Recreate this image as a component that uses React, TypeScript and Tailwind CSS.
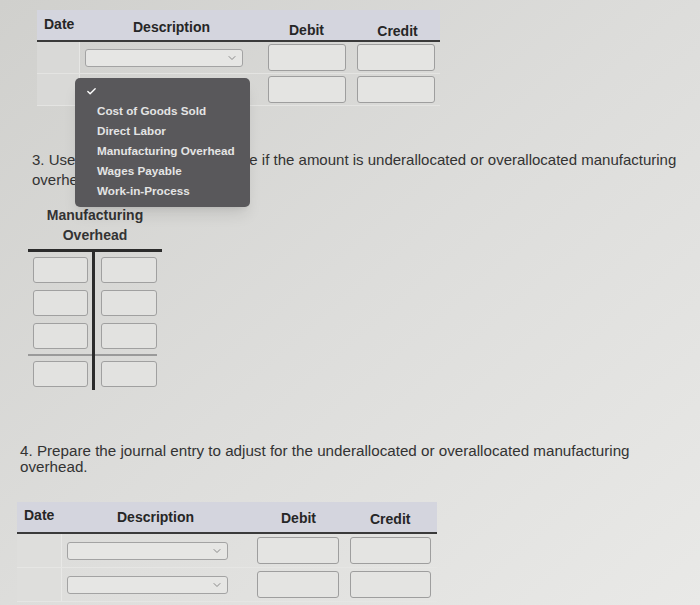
import { Check, ChevronDown } from 'lucide-react';

const menuItems = [
  'Cost of Goods Sold',
  'Direct Labor',
  'Manufacturing Overhead',
  'Wages Payable',
  'Work-in-Process',
];

function SelectBox({ width }: { width: string }) {
  return (
    <div
      className={`${width} h-[18px] rounded-[3px] border border-[#a3a3a3] bg-[#e6e6e4] flex items-center justify-end pr-1`}
    >
      <ChevronDown className="w-3 h-3 text-[#8a8a8a]" strokeWidth={2} />
    </div>
  );
}

function AmountBox({ width }: { width: string }) {
  return <div className={`${width} h-[27px] rounded-[3px] border border-[#9e9e9e] bg-[#e4e4e2]`} />;
}

function TopJournal() {
  return (
    <div className="ml-[37px] pt-[10px] w-[403px]">
      <div className="grid grid-cols-[43px_182px_89px_89px] h-[30px] bg-[#d4d5de] text-[14px] font-bold text-[#262626]">
        <div className="pl-[7px] pt-[4px]">Date</div>
        <div className="pl-[53px] pt-[7px]">Description</div>
        <div className="text-center pt-[10px]">Debit</div>
        <div className="text-center pt-[11px] pl-[4px]">Credit</div>
      </div>
      <div className="h-[2px] bg-[#3a3a3a]" />
      {[0, 1].map((row) => (
        <div
          key={row}
          className="grid grid-cols-[43px_182px_89px_89px] h-[32px] border-b border-[#e4e4e2]"
        >
          <div className="bg-[#d9d9d7] border-r border-[#e6e6e4]" />
          <div className="flex items-center pl-[5px]">
            {row === 0 && <SelectBox width="w-[158px]" />}
          </div>
          <div className="flex items-center pl-[6px]">
            <AmountBox width="w-[78px]" />
          </div>
          <div className="flex items-center pl-[6px]">
            <AmountBox width="w-[78px]" />
          </div>
        </div>
      ))}
    </div>
  );
}

function TAccount() {
  const box = 'h-[26px] rounded-[3px] border border-[#a0a0a0] bg-[#e2e2e0]';
  return (
    <div className="ml-[28px] w-[134px]">
      <div className="text-center text-[14px] leading-[20px] font-bold text-[#333]">
        Manufacturing
        <br />
        Overhead
      </div>
      <div className="mt-[4px] h-[3px] bg-[#2b2b2b]" />
      <div className="flex">
        <div className="w-[64px] pl-[5px] pr-[4px] pt-[5px] flex flex-col gap-[7px]">
          <div className={box} />
          <div className={box} />
          <div className={box} />
          <div className="h-[2px] -mx-[5px] bg-[#9a9a9a] -my-[2px]" />
          <div className={box} />
        </div>
        <div className="w-[3px] h-[138px] bg-[#2b2b2b]" />
        <div className="w-[67px] pl-[6px] pr-[5px] pt-[5px] flex flex-col gap-[7px]">
          <div className={box} />
          <div className={box} />
          <div className={box} />
          <div className="h-[2px] -ml-[6px] bg-[#9a9a9a] -my-[2px]" />
          <div className={box} />
        </div>
      </div>
    </div>
  );
}

function BottomJournal() {
  return (
    <div className="ml-[17px] mt-[27px] w-[420px]">
      <div className="grid grid-cols-[45px_188px_96px_91px] h-[30px] bg-[#d4d5de] text-[14px] font-bold text-[#262626]">
        <div className="pl-[7px] pt-[3px]">Date</div>
        <div className="pl-[55px] pt-[5px]">Description</div>
        <div className="pl-[31px] pt-[6px]">Debit</div>
        <div className="pl-[24px] pt-[7px]">Credit</div>
      </div>
      <div className="h-[2px] bg-[#3a3a3a]" />
      {[0, 1].map((row) => (
        <div
          key={row}
          className="grid grid-cols-[45px_188px_96px_91px] h-[34px] border-b border-[#e6e6e4]"
        >
          <div className="bg-[#dededc] border-r border-[#e8e8e6]" />
          <div className="flex items-center pl-[5px]">
            <SelectBox width="w-[161px]" />
          </div>
          <div className="flex items-center pl-[7px]">
            <AmountBox width="w-[82px]" />
          </div>
          <div className="flex items-center pl-[4px]">
            <AmountBox width="w-[81px]" />
          </div>
        </div>
      ))}
    </div>
  );
}

export default function App() {
  return (
    <div
      className="relative w-[700px] h-[605px] overflow-hidden bg-gradient-to-br from-[#d0d0cd] via-[#dddddb] to-[#e9e9e7] text-[#333]"
      style={{ fontFamily: '"Liberation Sans", Arial, sans-serif' }}
    >
      <TopJournal />

      <p className="mt-[44px] pl-[32px] pr-[10px] text-[15px] leading-[20px]">
        3. Use the T-account to determine if the amount is underallocated or overallocated manufacturing
        overhead.
      </p>

      <div className="mt-[15px]">
        <TAccount />
      </div>

      <p className="mt-[53px] pl-[20px] pr-[50px] text-[15.2px] leading-[16px]">
        4. Prepare the journal entry to adjust for the underallocated or overallocated manufacturing
        overhead.
      </p>

      <BottomJournal />

      <div className="absolute left-[75px] top-[78px] w-[175px] h-[129px] rounded-[5px] bg-[#59585b] shadow-lg text-[#e4e4e4] text-[11.7px] font-bold leading-[20px]">
        <Check className="absolute left-[11px] top-[8px] w-[11px] h-[11px] text-white" strokeWidth={3} />
        <div className="pt-[23px] pl-[22px]">
          {menuItems.map((item) => (
            <div key={item}>{item}</div>
          ))}
        </div>
      </div>
    </div>
  );
}
